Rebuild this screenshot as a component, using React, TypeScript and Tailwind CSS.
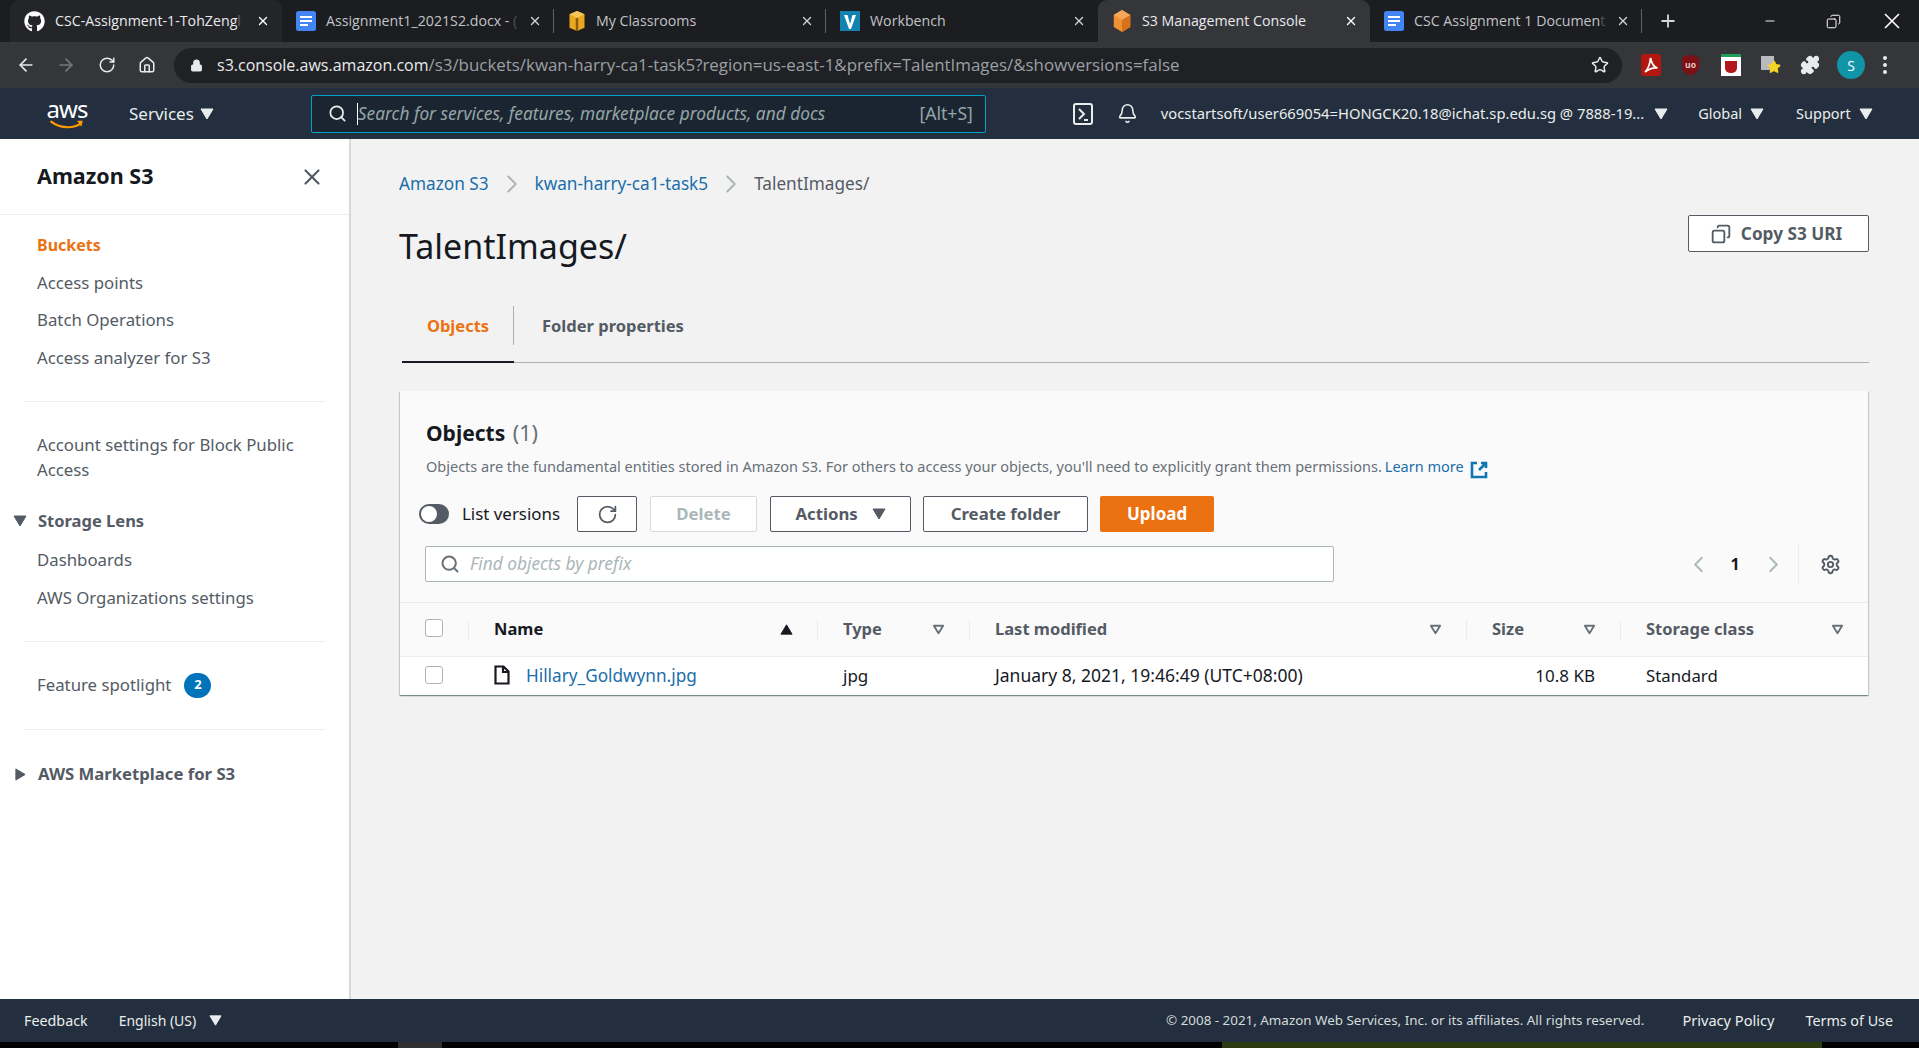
import React from "react";
import { FaGithub } from "react-icons/fa";
import { ArrowLeft, ArrowRight, RotateCw, Home, Lock, Star, Puzzle, Search, X, Plus, Minus, Bell, Copy, ChevronLeft, ChevronRight, Settings } from "lucide-react";

const Tri = ({ dir = "down", className = "" }: { dir?: "down" | "up" | "right"; className?: string }) => {
  const pts = dir === "down" ? "1,2 13,2 7,12" : dir === "up" ? "1,12 13,12 7,2" : "2,1 12,7 2,13";
  return (
    <svg viewBox="0 0 14 14" className={className} fill="currentColor" stroke="currentColor" strokeWidth="1" strokeLinejoin="round">
      <polygon points={pts} />
    </svg>
  );
};

const FilterTri = () => (
  <svg viewBox="0 0 14 14" className="w-[13px] h-[13px] text-[#687078]" fill="none" stroke="currentColor" strokeWidth="2" strokeLinejoin="round">
    <polygon points="2,3 12,3 7,11" />
  </svg>
);

const Doc = () => (
  <svg viewBox="0 0 20 20" className="w-[20px] h-[20px] shrink-0">
    <rect x="0" y="0" width="20" height="20" rx="2.5" fill="#4285f4" />
    <rect x="4" y="5" width="12" height="2" fill="#fff" />
    <rect x="4" y="9" width="12" height="2" fill="#fff" />
    <rect x="4" y="13" width="8" height="2" fill="#fff" />
  </svg>
);

const YellowBox = () => (
  <svg viewBox="0 0 20 24" className="w-[18px] h-[20px] shrink-0">
    <path d="M10 0l9 4v16l-9 4-9-4V4z" fill="#e9a820" />
    <path d="M10 8L1 4l9-4 9 4z" fill="#f6c65b" />
    <path d="M8.5 8.5h3V24h-3z" fill="#8a5a10" />
  </svg>
);

const Vocareum = () => (
  <svg viewBox="0 0 20 20" className="w-[20px] h-[20px] shrink-0">
    <rect width="20" height="20" fill="#1283b0" />
    <path d="M4 4h3.5L10 13l2.5-9H16l-5 14H9z" fill="#fff" />
  </svg>
);

const OrangeCube = () => (
  <svg viewBox="0 0 20 24" className="w-[20px] h-[22px] shrink-0">
    <path d="M10 0l9 5.5v13L10 24l-9-5.5v-13z" fill="#f09035" />
    <path d="M10 11L1 5.5 10 0l9 5.5z" fill="#f5a85a" />
    <path d="M10 11l9-5.5v13L10 24z" fill="#d9701a" />
  </svg>
);

type TabP = { icon: React.ReactNode; label: string; fade?: string; bg?: string; sep?: boolean; active?: boolean };

const Tab = ({ icon, label, fade, bg = "", sep, active }: TabP) => (
  <div className={`relative flex items-center h-[42px] w-[272px] shrink-0 pl-[14px] pr-[12px] rounded-t-[9px] ${bg}`}>
    {icon}
    <span className={`ml-[10px] whitespace-nowrap text-[14.2px] ${active ? "text-[#e8eaed]" : "text-[#c0c3c7]"}`}>
      {label}
      {fade && <span className="opacity-30">{fade}</span>}
    </span>
    <X size={14} strokeWidth={2.4} className={`ml-auto ${active ? "text-white" : "text-[#d0d2d5]"}`} />
    {sep && <span className="absolute right-0 top-[9px] h-[24px] w-px bg-[#5f6368]" />}
  </div>
);

const Sep = () => <span className="w-px h-[20px] bg-[#eaeded]" />;

const NavLink = ({ children, cls = "" }: { children: React.ReactNode; cls?: string }) => (
  <div className={`text-[16.8px] leading-[24px] text-[#545b64] ${cls}`}>{children}</div>
);

const Divider = ({ cls = "" }: { cls?: string }) => <div className={`h-px bg-[#eaeded] ml-[24px] w-[301px] ${cls}`} />;

const Btn = ({ children, cls = "" }: { children: React.ReactNode; cls?: string }) => (
  <div className={`flex items-center justify-center h-[36px] rounded-[2px] border border-[#545b64] bg-white text-[#545b64] font-bold text-[16.8px] ${cls}`}>{children}</div>
);

const Box = ({ cls = "" }: { cls?: string }) => <span className={`block w-[18px] h-[18px] rounded-[3px] border border-[#aab7b8] bg-white ${cls}`} />;

const Chevron = () => <ChevronRight size={30} strokeWidth={1.6} className="mx-[8px] text-[#aab7b8]" />;

const columns = "grid grid-cols-[69px_349px_152px_497px_154px_247px]";

export default function App() {
  return (
    <div className="w-[1919px] h-[1048px] overflow-hidden flex flex-col bg-black font-['Noto_Sans',sans-serif]">
      {/* Tab strip */}
      <div className="h-[42px] shrink-0 bg-[#1c1d20] flex items-end pl-[10px] font-['Open_Sans',sans-serif]">
        <Tab icon={<FaGithub size={21} className="text-white shrink-0" />} label="CSC-Assignment-1-TohZeng" fade="l" bg="bg-[#242528]" active />
        <Tab icon={<Doc />} label="Assignment1_2021S2.docx -" fade=" (" sep />
        <Tab icon={<YellowBox />} label="My Classrooms" sep />
        <Tab icon={<Vocareum />} label="Workbench" />
        <Tab icon={<OrangeCube />} label="S3 Management Console" bg="bg-[#35363a]" active />
        <Tab icon={<Doc />} label="CSC Assignment 1 Documen" fade="t" sep />
        <Plus size={20} strokeWidth={2.2} className="ml-[16px] mb-[11px] text-[#d5d7da]" />
        <Minus size={14} strokeWidth={1.6} className="ml-[85px] mb-[14px] text-white" />
        <Copy size={15} strokeWidth={1.6} className="ml-[49px] mb-[13px] text-white -scale-x-100" />
        <svg viewBox="0 0 18 18" className="ml-[42px] mb-[12px] w-[18px] h-[18px] shrink-0" stroke="#ffffff" strokeWidth="1.6" fill="none">
          <path d="M2 2l14 14M16 2L2 16" />
        </svg>
      </div>

      {/* Toolbar */}
      <div className="h-[46px] shrink-0 bg-[#35363a] flex items-center pl-[16px] font-['Open_Sans',sans-serif]">
        <ArrowLeft size={20} className="text-[#e8eaed]" />
        <ArrowRight size={20} className="ml-[20px] text-[#74777c]" />
        <RotateCw size={18} className="ml-[22px] text-[#e8eaed]" />
        <Home size={18} className="ml-[22px] text-[#e8eaed]" />
        <div className="ml-[18px] w-[1448px] h-[35px] rounded-full bg-[#202124] flex items-center pl-[16px] pr-[13px]">
          <Lock size={13} fill="#e8eaed" className="text-[#e8eaed]" />
          <div className="ml-[14px] text-[16.9px] whitespace-nowrap text-[#9aa0a6]">
            <span className="text-[16px] text-[#e8eaed]">s3.console.aws.amazon.com</span>/s3/buckets/kwan-harry-ca1-task5?region=us-east-1&amp;prefix=TalentImages/&amp;showversions=false
          </div>
          <Star size={18} className="ml-auto text-[#e8eaed]" />
        </div>
        <svg viewBox="0 0 20 22" className="ml-[19px] w-[20px] h-[22px]">
          <rect width="20" height="22" rx="3" fill="#b3170f" />
          <path d="M4 18c3-3 5-8 5.5-14 1 5 3 9 7 10-4-.5-8 .5-12.5 4z" fill="none" stroke="#fff" strokeWidth="1.7" />
        </svg>
        <svg viewBox="0 0 20 22" className="ml-[20px] w-[19px] h-[22px]">
          <path d="M10 0l9 3v9c0 5-4 8-9 10-5-2-9-5-9-10V3z" fill="#7c1014" />
          <text x="10" y="14" textAnchor="middle" fontSize="9" fontWeight="700" fill="#e7c7c7">uo</text>
        </svg>
        <div className="ml-[21px] w-[20px] h-[22px] bg-white border-t-[3px] border-[#1e9e5a] flex items-center justify-center">
          <span className="w-[12px] h-[12px] rounded-b-[5px] bg-[#b3171d]" />
        </div>
        <div className="ml-[20px] relative w-[20px] h-[20px]">
          <span className="absolute left-0 top-[1px] w-[13px] h-[14px] bg-[#b8babd]" />
          <Star size={14} fill="#f5d328" className="absolute left-[6px] top-[5px] text-[#f5d328]" />
        </div>
        <Puzzle size={20} fill="#e8eaed" className="ml-[19px] text-[#e8eaed]" />
        <div className="ml-[17px] w-[28px] h-[28px] rounded-full bg-[#0f94a8] text-white text-[14px] flex items-center justify-center">S</div>
        <div className="ml-[18px] flex flex-col gap-[3px]">
          <span className="w-[4px] h-[4px] rounded-full bg-[#e8eaed]" />
          <span className="w-[4px] h-[4px] rounded-full bg-[#e8eaed]" />
          <span className="w-[4px] h-[4px] rounded-full bg-[#e8eaed]" />
        </div>
      </div>

      {/* AWS nav */}
      <div className="h-[51px] shrink-0 bg-[#232f3e] flex items-center text-[#eaeded] text-[17px]">
        <div className="ml-[46px] w-[42px] h-[34px] flex flex-col items-center text-white">
          <span className="text-[24px] leading-[24px] tracking-[-1px]">aws</span>
          <svg viewBox="0 0 42 12" className="w-[42px] h-[10px] -mt-[1px]">
            <path d="M2 2c10 8 26 9 36 2" fill="none" stroke="#f90" strokeWidth="2.6" strokeLinecap="round" />
            <path d="M33 1l7 0-2 7z" fill="#f90" />
          </svg>
        </div>
        <span className="ml-[41px]">Services</span>
        <Tri className="ml-[6px] w-[14px] h-[14px]" />
        <div className="ml-[97px] w-[675px] h-[38px] rounded-[2px] border border-[#00a1c9] bg-[#1b2532] flex items-center pl-[16px] pr-[12px]">
          <Search size={19} strokeWidth={2.2} className="text-[#eaeded]" />
          <span className="ml-[10px] h-[22px] w-px bg-white" />
          <span className="italic text-[17.3px] text-[#95a5a6]">Search for services, features, marketplace products, and docs</span>
          <span className="ml-auto text-[17.6px] text-[#95a5a6]">[Alt+S]</span>
        </div>
        <svg viewBox="0 0 20 22" className="ml-[87px] w-[20px] h-[22px]" fill="none" stroke="#eaeded" strokeWidth="2">
          <rect x="1" y="1" width="18" height="20" rx="2" />
          <path d="M6 6l5 5-5 5M11 17h4" />
        </svg>
        <Bell size={21} strokeWidth={1.8} className="ml-[24px]" />
        <span className="ml-[23px] whitespace-nowrap text-[14.75px]">vocstartsoft/user669054=HONGCK20.18@ichat.sp.edu.sg @ 7888-19...</span>
        <Tri className="ml-[10px] w-[14px] h-[14px]" />
        <span className="ml-[30px] text-[14.5px]">Global</span>
        <Tri className="ml-[8px] w-[14px] h-[14px]" />
        <span className="ml-[32px] text-[14.5px]">Support</span>
        <Tri className="ml-[8px] w-[14px] h-[14px]" />
      </div>

      {/* Body */}
      <div className="flex-1 min-h-0 flex bg-[#f2f2f3]">
        <aside className="w-[351px] shrink-0 bg-white border-r-2 border-[#d5dbdb]">
          <div className="h-[76px] border-b border-[#eaeded] flex items-center pl-[37px] pr-[24px]">
            <span className="text-[21.5px] font-bold text-[#16191f]">Amazon S3</span>
            <X size={26} strokeWidth={2} className="ml-auto text-[#545b64]" />
          </div>
          <div className="pl-[37px] pt-[18px]">
            <NavLink cls="text-[#ec7211] font-bold !text-[16px]">Buckets</NavLink>
            <NavLink cls="mt-[14px]">Access points</NavLink>
            <NavLink cls="mt-[13px]">Batch Operations</NavLink>
            <NavLink cls="mt-[14px]">Access analyzer for S3</NavLink>
          </div>
          <Divider cls="mt-[31px]" />
          <div className="pl-[37px] pt-[30px] pr-[20px]">
            <NavLink cls="leading-[25px]">Account settings for Block Public Access</NavLink>
          </div>
          <div className="flex items-center mt-[27px] h-[24px] text-[#545b64]">
            <Tri className="ml-[13px] w-[14px] h-[14px]" />
            <span className="ml-[11px] font-bold text-[16.5px]">Storage Lens</span>
          </div>
          <div className="pl-[37px] pt-[15px]">
            <NavLink>Dashboards</NavLink>
            <NavLink cls="mt-[14px]">AWS Organizations settings</NavLink>
          </div>
          <Divider cls="mt-[31px]" />
          <div className="pl-[37px] mt-[30px] flex items-center h-[26px]">
            <NavLink>Feature spotlight</NavLink>
            <span className="ml-[13px] w-[27px] h-[25px] rounded-full bg-[#0073bb] text-white text-[13px] font-bold flex items-center justify-center">2</span>
          </div>
          <Divider cls="mt-[31px]" />
          <div className="flex items-center mt-[32px] h-[24px] text-[#545b64]">
            <Tri dir="right" className="ml-[14px] w-[13px] h-[13px]" />
            <span className="ml-[11px] font-bold text-[16.7px]">AWS Marketplace for S3</span>
          </div>
        </aside>

        <main className="flex-1 min-w-0 pl-[48px] pr-[50px]">
          <div className="flex items-center h-[24px] mt-[33px] text-[17.2px] text-[#1a6ea9]">
            <span>Amazon S3</span>
            <Chevron />
            <span>kwan-harry-ca1-task5</span>
            <Chevron />
            <span className="text-[#545b64]">TalentImages/</span>
          </div>
          <div className="flex items-start">
            <h1 className="mt-[28px] text-[34px] leading-[44px] text-[#16191f]">TalentImages/</h1>
            <Btn cls="ml-auto mt-[19px] w-[181px] h-[37px] pr-[4px] !text-[17.2px]">
              <Copy size={20} strokeWidth={2.2} className="mr-[10px] -scale-x-100" />
              Copy S3 URI
            </Btn>
          </div>

          <div className="mt-[37px] border-b border-[#b0b0b0] flex h-[58px] ml-[3px]">
            <div className="w-[112px] border-b-[2px] border-[#16191f] h-[58px] pt-[2px] flex">
              <span className="w-full h-[39px] flex items-center justify-center text-[#ec7211] font-bold text-[16.5px]">Objects</span>
            </div>
            <div className="relative pt-[2px] h-[39px] flex items-center">
              <span className="w-px h-[39px] bg-[#b0b0b0] -ml-[1px]" />
              <span className="ml-[28px] text-[#545b64] font-bold text-[16.5px] mt-[2px]">Folder properties</span>
            </div>
          </div>

          {/* Card */}
          <section className="mt-[28px] ml-[1px] w-[1468px] bg-[#fafafa] shadow-[0_1px_1px_0_rgba(0,28,36,0.3),1px_1px_1px_0_rgba(0,28,36,0.15),-1px_1px_1px_0_rgba(0,28,36,0.15)]">
            <div className="pl-[26px] pt-[26px] h-[64px]">
              <span className="text-[21px] font-bold text-[#16191f]">Objects</span>
              <span className="ml-[2px] text-[21.5px] text-[#687078]"> (1)</span>
            </div>
            <div className="pl-[26px] text-[14.5px] h-[24px] flex items-center text-[#687078] whitespace-nowrap">
              Objects are the fundamental entities stored in Amazon S3. For others to access your objects, you'll need to explicitly grant them permissions.
              <span className="ml-[3px] text-[#1a6ea9]">Learn more</span>
              <svg viewBox="0 0 18 18" className="ml-[6px] mt-[6px] w-[18px] h-[18px]" fill="none" stroke="#0f75b5" strokeWidth="2.6">
                <path d="M7 2H2v14h14v-5M9 9l7-7M11 2h5v5" />
              </svg>
            </div>
            <div className="flex items-center mt-[17px] pl-[19px]">
              <span className="relative w-[30px] h-[20px] rounded-full bg-[#545b64]">
                <span className="absolute left-[2px] top-[2px] w-[16px] h-[16px] rounded-full bg-white" />
              </span>
              <span className="ml-[13px] text-[16.9px] text-[#16191f]">List versions</span>
              <Btn cls="ml-[17px] w-[60px]"><RotateCw size={21} strokeWidth={2} /></Btn>
              <Btn cls="ml-[13px] w-[107px] border-[#d5dbdb] text-[#aab7b8] bg-[#fafafa]">Delete</Btn>
              <Btn cls="ml-[13px] w-[141px]">Actions<Tri className="ml-[14px] w-[14px] h-[14px]" /></Btn>
              <Btn cls="ml-[12px] w-[165px]">Create folder</Btn>
              <div className="ml-[12px] w-[114px] h-[36px] rounded-[2px] bg-[#ec7211] text-white font-bold text-[17px] flex items-center justify-center">Upload</div>
            </div>
            <div className="flex items-center mt-[14px] pl-[25px] h-[36px]">
              <div className="w-[909px] h-[36px] bg-white border border-[#aab7b8] rounded-[2px] flex items-center pl-[14px]">
                <Search size={20} strokeWidth={2.4} className="text-[#687078]" />
                <span className="ml-[10px] italic text-[17.3px] text-[#aab7b8]">Find objects by prefix</span>
              </div>
              <ChevronLeft size={27} strokeWidth={1.6} className="ml-[351px] text-[#aab7b8]" />
              <span className="ml-[17px] w-[12px] text-center text-[16px] font-bold text-[#16191f]">1</span>
              <ChevronRight size={27} strokeWidth={1.6} className="ml-[19px] text-[#aab7b8]" />
              <span className="ml-[11px] w-px h-[38px] bg-[#eaeded]" />
              <Settings size={21} strokeWidth={2.2} className="ml-[21px] text-[#545b64]" />
            </div>
            <div className={`${columns} mt-[20px] h-[55px] items-center border-t border-b border-[#eaeded] text-[16.5px] font-bold text-[#545b64]`}>
              <div className="flex items-center pl-[25px] h-[26px] justify-between"><Box cls="-mt-[4px]" /><Sep /></div>
              <div className="flex items-center pl-[25px] text-[#16191f] h-[26px]">Name<Tri dir="up" className="ml-auto mr-[24px] w-[13px] h-[13px]" /><Sep /></div>
              <div className="flex items-center pl-[25px] h-[26px]">Type<span className="ml-auto mr-[24px]"><FilterTri /></span><Sep /></div>
              <div className="flex items-center pl-[25px] h-[26px]">Last modified<span className="ml-auto mr-[24px]"><FilterTri /></span><Sep /></div>
              <div className="flex items-center pl-[25px] h-[26px]">Size<span className="ml-auto mr-[24px]"><FilterTri /></span><Sep /></div>
              <div className="flex items-center pl-[25px] h-[26px]">Storage class<span className="ml-auto mr-[24px]"><FilterTri /></span></div>
            </div>
            <div className={`${columns} h-[38px] pb-[1px] items-center bg-white text-[17px] text-[#16191f]`}>
              <div className="pl-[25px]"><Box cls="-mt-[2px]" /></div>
              <div className="flex items-center pl-[25px]">
                <svg viewBox="0 0 16 20" className="w-[16px] h-[20px]" fill="none" stroke="#16191f" strokeWidth="2.2">
                  <path d="M1.5 1.5h8l5 5v12h-13zM9 1.5V7h5.5" />
                </svg>
                <span className="ml-[16px] text-[17.2px] text-[#1a6ea9]">Hillary_Goldwynn.jpg</span>
              </div>
              <div className="pl-[25px]">jpg</div>
              <div className="pl-[25px] text-[17.5px]">January 8, 2021, 19:46:49 (UTC+08:00)</div>
              <div className="text-right pr-[26px]">10.8 KB</div>
              <div className="pl-[25px] text-[16.8px]">Standard</div>
            </div>
          </section>
        </main>
      </div>

      {/* Footer */}
      <div className="h-[43px] shrink-0 bg-[#232f3e] flex items-center text-[#eaeded] text-[14.3px]">
        <span className="ml-[24px]">Feedback</span>
        <span className="ml-[31px] text-[14px]">English (US)</span>
        <Tri className="ml-[13px] w-[13px] h-[13px]" />
        <span className="ml-auto text-[13.4px] text-[#d5dbdb]">© 2008 - 2021, Amazon Web Services, Inc. or its affiliates. All rights reserved.</span>
        <span className="ml-[38px] text-[14.6px]">Privacy Policy</span>
        <span className="ml-[31px] mr-[26px]">Terms of Use</span>
      </div>

      {/* Desktop sliver */}
      <div className="h-[6px] shrink-0 flex bg-black">
        <div className="ml-[398px] w-[44px] bg-[#2f2f2f]" />
        <div className="ml-[780px] w-[600px] bg-[#2c3a12]" />
      </div>
    </div>
  );
}
